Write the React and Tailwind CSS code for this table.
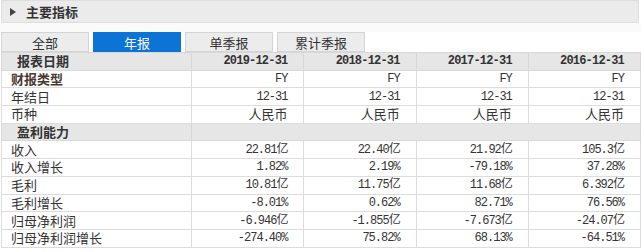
import React from "react";

const cjk = { fontFamily: '"Noto Sans CJK SC", "Noto Sans", sans-serif' };
const mono = { fontFamily: '"Liberation Mono", "Noto Sans CJK SC", monospace' };

const dates = ["2019-12-31", "2018-12-31", "2017-12-31", "2016-12-31"];

const infoRows = [
  { label: "财报类型", values: ["FY", "FY", "FY", "FY"], bold: true },
  { label: "年结日", values: ["12-31", "12-31", "12-31", "12-31"] },
  { label: "币种", values: ["人民币", "人民币", "人民币", "人民币"], cn: true },
];

const profitRows = [
  { label: "收入", values: ["22.81亿", "22.40亿", "21.92亿", "105.3亿"] },
  { label: "收入增长", values: ["1.82%", "2.19%", "-79.18%", "37.28%"] },
  { label: "毛利", values: ["10.81亿", "11.75亿", "11.68亿", "6.392亿"] },
  { label: "毛利增长", values: ["-8.01%", "0.62%", "82.71%", "76.56%"] },
  { label: "归母净利润", values: ["-6.946亿", "-1.855亿", "-7.673亿", "-24.07亿"] },
  { label: "归母净利润增长", values: ["-274.40%", "75.82%", "68.13%", "-64.51%"] },
];

const tabs = ["全部", "年报", "单季报", "累计季报"];

const App = () => {
  return (
    <div className="w-[641px] h-[252px] bg-white overflow-hidden text-[#333]" style={cjk}>
      {/* 标题栏 */}
      <div className="h-[23px] flex items-center bg-[#ebebeb] border border-[#dedede] ml-px mr-[2px]">
        <svg width="6" height="8" viewBox="0 0 6 8" className="ml-[8px]">
          <path d="M0 0 L6 4 L0 8 Z" fill="#444" />
        </svg>
        <span className="ml-[10px] text-[13px] font-bold text-[#333] leading-none">主要指标</span>
      </div>

      <div className="h-[9px] bg-[#fafafa]" />

      {/* 标签页 */}
      <div className="flex gap-[4px] h-[20px] pl-px">
        {tabs.map((t) => (
          <div
            key={t}
            className={`w-[88px] flex items-center justify-center text-[13px] leading-none border ${
              t === "年报"
                ? "bg-[#0b74d5] border-[#0b74d5] text-white"
                : "bg-[#ececec] border-[#d4d4d4] text-[#333]"
            }`}
          >
            {t}
          </div>
        ))}
      </div>

      {/* 数据表 */}
      <table className="border-collapse table-fixed w-[640px] ml-px">
        <colgroup>
          <col className="w-[190px]" />
          <col className="w-[112px]" />
          <col className="w-[112px]" />
          <col className="w-[112px]" />
          <col className="w-[112px]" />
        </colgroup>
        <tbody>
          <tr className="h-[17.7px] bg-[#e6e6e6]">
            <td className="border border-[#d8d8d8] pl-[15px] text-[13px] font-bold leading-[16px] p-0">报表日期</td>
            {dates.map((d) => (
              <td
                key={d}
                className="border border-[#d8d8d8] text-right pr-[16px] text-[12px] font-bold tracking-[-0.8px] leading-[16px] p-0"
                style={mono}
              >
                {d}
              </td>
            ))}
          </tr>
          {infoRows.map((r) => (
            <tr key={r.label} className="h-[17.7px]">
              <td
                className={`border border-[#dcdcdc] pl-[9px] text-[13px] leading-[16px] p-0 ${
                  r.bold ? "font-semibold text-[#4a3a30]" : ""
                }`}
              >
                {r.label}
              </td>
              {r.values.map((v, i) => (
                <td
                  key={i}
                  className={`border border-[#dcdcdc] text-right pr-[16px] leading-[16px] p-0 ${
                    r.cn ? "text-[13px]" : "text-[12px] tracking-[-1px]"
                  }`}
                  style={r.cn ? cjk : mono}
                >
                  {v}
                </td>
              ))}
            </tr>
          ))}
          <tr className="h-[17.7px] bg-[#e6e6e6]">
            <td className="border border-[#d8d8d8] pl-[15px] text-[13px] font-bold leading-[16px] p-0">盈利能力</td>
            <td colSpan={4} className="border border-[#d8d8d8] p-0" />
          </tr>
          {profitRows.map((r) => (
            <tr key={r.label} className="h-[17.7px]">
              <td className="border border-[#dcdcdc] pl-[9px] text-[13px] leading-[16px] p-0">{r.label}</td>
              {r.values.map((v, i) => (
                <td
                  key={i}
                  className="border border-[#dcdcdc] text-right pr-[16px] text-[12px] tracking-[-1px] leading-[16px] p-0"
                  style={mono}
                >
                  {v}
                </td>
              ))}
            </tr>
          ))}
        </tbody>
      </table>
    </div>
  );
};

export default App;
